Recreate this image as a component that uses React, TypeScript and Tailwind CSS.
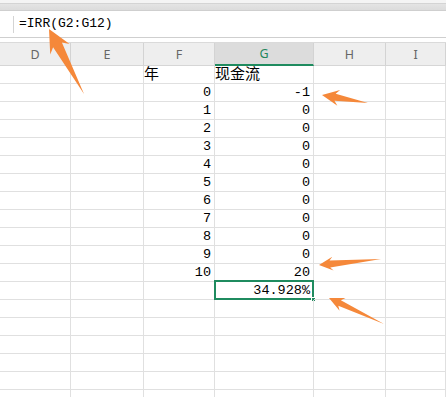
const cols = [
  { key: 'D', w: 'w-[71px]' },
  { key: 'E', w: 'w-[73px]' },
  { key: 'F', w: 'w-[71px]' },
  { key: 'G', w: 'w-[99px]' },
  { key: 'H', w: 'w-[72px]' },
  { key: 'I', w: 'flex-1' },
];

type Row = { f?: string; g?: string; text?: boolean; selected?: boolean };

const rows: Row[] = [
  { f: '年', g: '现金流', text: true },
  ...['-1', '0', '0', '0', '0', '0', '0', '0', '0', '0', '20'].map((g, i) => ({ f: String(i), g })),
  { g: '34.928%', selected: true },
  ...Array.from({ length: 6 }, () => ({})),
];

const mono = "font-['Liberation_Mono',monospace]";
const cjk = "font-['Noto_Sans_CJK_SC',sans-serif]";

type Pt = [number, number];

// arrow polygon: tip, wing, neck, tail, neck, wing
function arrow(tip: Pt, tail: Pt, head: number, half: number, neck: number) {
  const dx = tail[0] - tip[0];
  const dy = tail[1] - tip[1];
  const len = Math.hypot(dx, dy);
  const d = [dx / len, dy / len];
  const n = [-d[1], d[0]];
  const at = (a: number, b: number) => `${tip[0] + d[0] * a + n[0] * b},${tip[1] + d[1] * a + n[1] * b}`;
  return [
    `${tip[0]},${tip[1]}`,
    at(head, half),
    at(head * 0.78, neck),
    `${tail[0]},${tail[1]}`,
    at(head * 0.78, -neck),
    at(head, -half),
  ].join(' ');
}

function Cell({ children, right, text }: { children?: string; right?: boolean; text?: boolean }) {
  return (
    <div
      className={`h-full flex items-end leading-none ${right ? 'justify-end pr-[3px] pb-[2px]' : 'pb-[3px]'} ${
        text ? `${cjk} text-[15px]` : `${mono} text-[13.5px]`
      } text-black`}
    >
      {children}
    </div>
  );
}

export default function App() {
  return (
    <div className="relative w-[446px] h-[397px] overflow-hidden bg-white">
      {/* window chrome */}
      <div className="h-[3px] bg-[#f4f4f4]" />
      <div className="h-[7px] bg-linear-to-b from-[#e4e4e4] to-[#dcdcdc] border-t border-[#d4d4d4]" />

      {/* formula bar */}
      <div className="h-[28px] flex items-center border-t border-b border-[#cfcfcf] bg-white">
        <div className="ml-[13px] w-px h-[17px] bg-[#d4d4d4]" />
        <span className={`ml-[5px] ${mono} text-[13px] text-black`}>=IRR(G2:G12)</span>
      </div>
      <div className="h-[4px]" />

      {/* column header */}
      <div className="flex h-[24px] bg-[#eeeeee] border-t border-[#dadada]">
        {cols.map((c) => (
          <div
            key={c.key}
            className={`${c.w} shrink-0 flex items-center justify-center pt-[2px] border-r border-[#d3d3d3] font-['Noto_Sans',sans-serif] text-[12.5px] ${
              c.key === 'G'
                ? 'bg-[#dcdcdc] text-[#23875c] border-b-2 border-b-[#1f8b5f]'
                : 'text-[#666] border-b border-b-[#d6d6d6]'
            }`}
          >
            {c.key}
          </div>
        ))}
      </div>

      {/* grid */}
      {rows.map((r, i) => (
        <div key={i} className="flex h-[18px]">
          {cols.map((c) => (
            <div key={c.key} className={`${c.w} shrink-0 relative border-r border-b border-[#e0e0e0]`}>
              {c.key === 'F' && r.f && <Cell right={!r.text} text={r.text}>{r.f}</Cell>}
              {c.key === 'G' && r.g && <Cell right={!r.text} text={r.text}>{r.g}</Cell>}
              {c.key === 'G' && r.selected && (
                <>
                  <div className="absolute -top-[2px] -left-[1px] -right-[1px] -bottom-[1px] border-2 border-[#1f8b5f]" />
                  <div className="absolute -right-[3px] -bottom-[3px] w-[5px] h-[5px] bg-[#1f8b5f] border border-white" />
                </>
              )}
            </div>
          ))}
        </div>
      ))}

      {/* annotation arrows */}
      <svg className="absolute inset-0 pointer-events-none" width="446" height="397">
        <g fill="#f5883a">
          <polygon points={arrow([49, 29], [84, 94], 23, 11, 5)} />
          <polygon points={arrow([322, 95], [368, 103], 17, 8, 3.5)} />
          <polygon points={arrow([319, 265], [381, 259], 14, 7, 3.5)} />
          <polygon points={arrow([329, 298], [384, 324], 15, 7, 3)} />
        </g>
      </svg>
    </div>
  );
}
